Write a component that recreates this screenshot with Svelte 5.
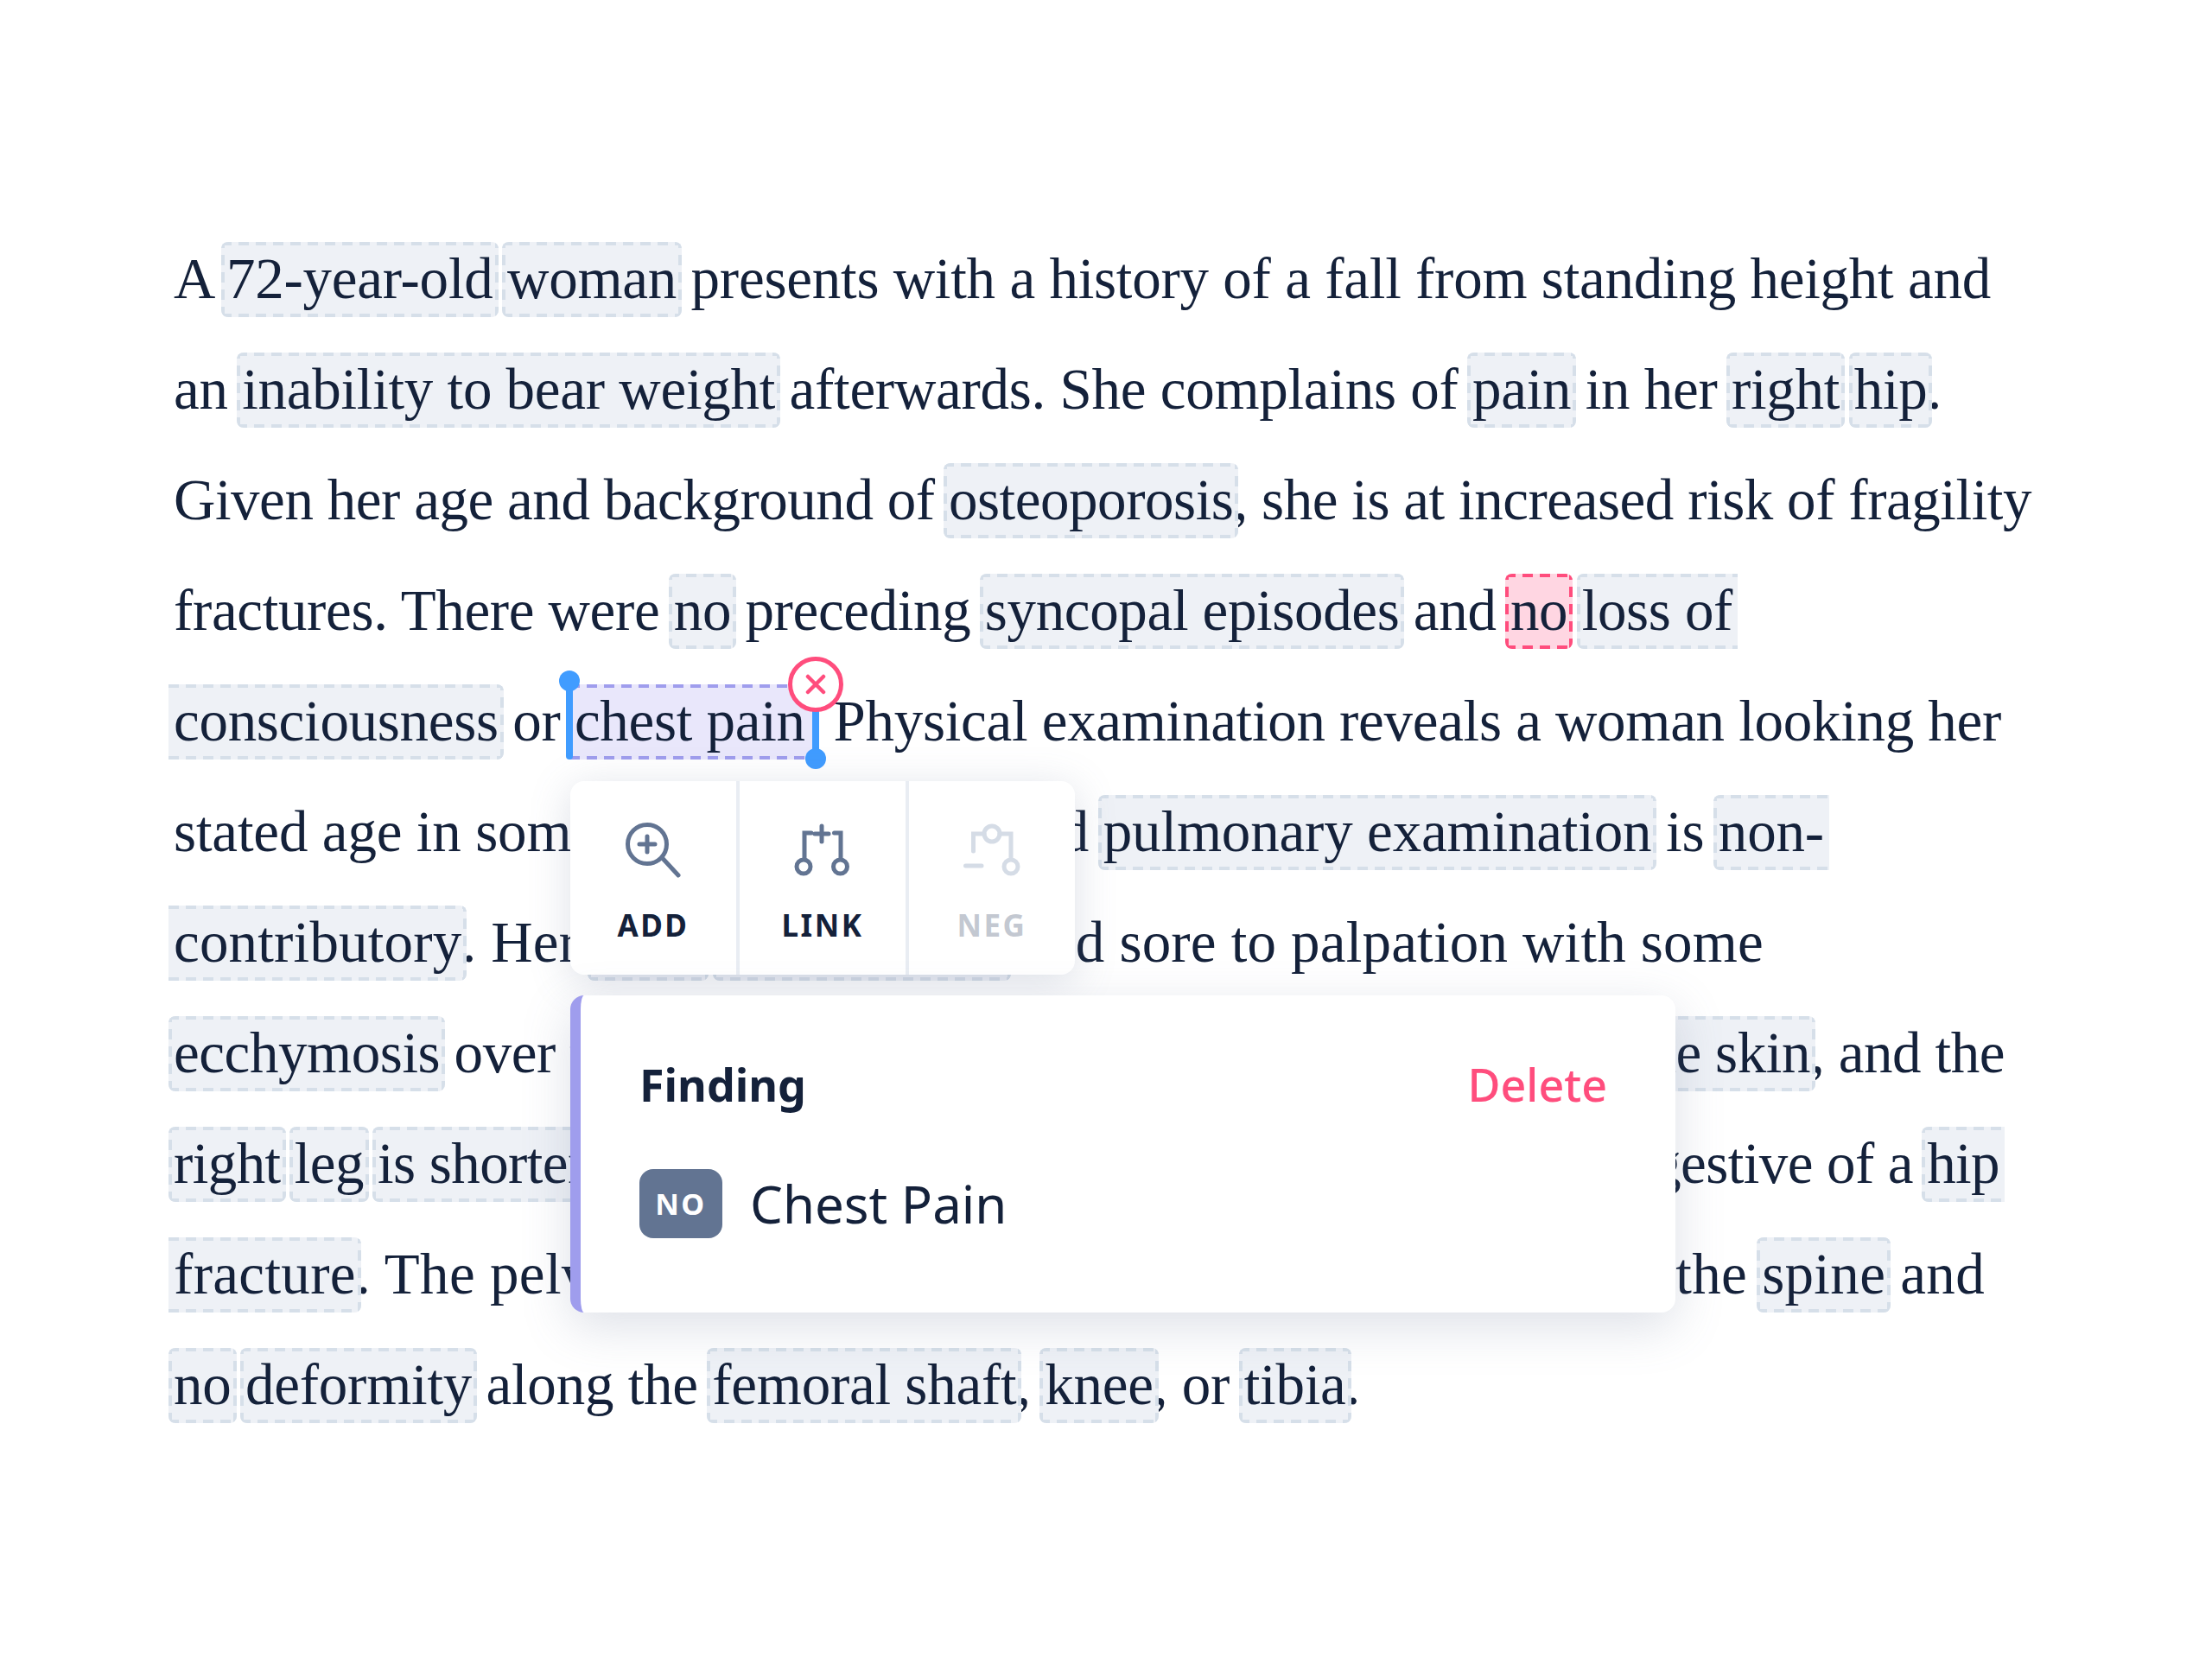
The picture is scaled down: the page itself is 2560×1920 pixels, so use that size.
<script>
  // [x] token, {x} negated token, (x) selected token, < and > mark a token that wraps over a line end
  const lines = [
    { w: 2103, text: 'A [72-year-old] [woman] presents with a history of a fall from standing height and' },
    { w: 2046, text: 'an [inability to bear weight] afterwards. She complains of [pain] in her [right] [hip].' },
    { w: 2150, text: 'Given her age and background of [osteoporosis], she is at increased risk of fragility' },
    { w: 1804, text: 'fractures. There were [no] preceding [syncopal episodes] and {no} [loss of>' },
    { w: 2115, text: '<consciousness] or (chest pain). Physical examination reveals a woman looking her' },
    { w: 1910, text: 'stated age in some distress. Cardiac and [pulmonary examination] is [non->' },
    { w: 1840, text: '<contributory]. Her [right] [hip is tender] and sore to palpation with some' },
    { w: 2119, text: '[ecchymosis] over the lateral surface of the hip with no [breaks of the skin], and the' },
    { w: 2113, text: '[right] [leg] [is shortened and externally rotated] and this is highly suggestive of a [hip>' },
    { w: 2096, text: '<fracture]. The pelvis is stable. There is no tenderness throughout the [spine] and' },
    { w: 1373, text: '[no] [deformity] along the [femoral shaft], [knee], or [tibia].' }
  ];

  function parse(text) {
    return text.split(/([\[<{(][^\]>})]*[\]>})])/).filter(Boolean).map((part) => {
      const open = part[0];
      const close = part[part.length - 1];
      if ('[<{('.includes(open) && part.length > 1 && ']>})'.includes(close)) {
        return {
          label: part.slice(1, -1),
          cls: [
            'token',
            open === '{' ? 'neg' : '',
            open === '(' ? 'selected' : '',
            open === '<' ? 'cut-left' : '',
            close === '>' ? 'cut-right' : ''
          ].join(' ')
        };
      }
      return { label: part, cls: '' };
    });
  }

  // squeeze a line's tracking so it ends where the note's line ends
  function fit(node, line) {
    const chars = line.text.replace(/[\[\]{}()<>]/g, '').length;
    const natural = node.getBoundingClientRect().width;
    node.style.letterSpacing = (line.w - natural) / chars + 'px';
  }
</script>

<main class="page">
  <article class="note">
    {#each lines as line}
      <p class="line" use:fit={line}>
        {#each parse(line.text) as part}
          {#if part.cls}
            <span class={part.cls}>{#if part.cls.includes('selected')}<i class="handle start"></i><i class="handle end"></i><button class="remove" aria-label="Remove"><svg viewBox="0 0 24 24" width="24" height="24"><path d="M3 3 21 21M21 3 3 21" /></svg></button>{/if}{part.label}</span>
          {:else}{part.label}{/if}
        {/each}
      </p>
    {/each}
  </article>

  <div class="toolbar">
    <button class="tool">
      <svg viewBox="0 0 80 80" width="80" height="80">
        <circle cx="33" cy="27" r="22.5" />
        <path d="M33 18V36M24 27H42M50.5 43 69 63" />
      </svg>
      <span>ADD</span>
    </button>
    <button class="tool">
      <svg viewBox="0 0 80 80" width="80" height="80">
        <circle cx="18" cy="53" r="8" />
        <circle cx="60.5" cy="53" r="8" />
        <path d="M19 44V14H27M61 44V14H53.5M39 6V24M31 15H47" />
      </svg>
      <span>LINK</span>
    </button>
    <button class="tool off">
      <svg viewBox="0 0 80 80" width="80" height="80">
        <circle cx="40" cy="15" r="9" />
        <circle cx="62" cy="53" r="8" />
        <path d="M18.5 35V15H31M49 15H62V44M9.5 52H28" />
      </svg>
      <span>NEG</span>
    </button>
  </div>

  <section class="finding">
    <header>
      <h2>Finding</h2>
      <button class="delete">Delete</button>
    </header>
    <div class="concept">
      <span class="badge">NO</span>
      <span>Chest Pain</span>
    </div>
  </section>
</main>

<style>
  :global(body) {
    margin: 0;
    background: #fff;
  }

  .page {
    position: relative;
    height: 1920px;
    overflow: hidden;
    color: #14213a;
  }

  .note {
    padding: 258px 0 0 201px;
    font-family: 'Liberation Serif', serif;
    font-size: 67px;
  }

  .line {
    margin: 0;
    width: fit-content;
    height: 128px;
    line-height: 128px;
    white-space: nowrap;
  }

  .token {
    --fill: #eef1f6;
    --dash: #d6dfe9;
    --h: repeating-linear-gradient(90deg, var(--dash) 0 12px, transparent 12px 20px);
    --v: repeating-linear-gradient(0deg, var(--dash) 0 12px, transparent 12px 20px);
    position: relative;
    padding: 5px 6px 8px;
    margin: 0 -6px;
    border-radius: 8px;
    background:
      var(--h) top / 100% 4px no-repeat,
      var(--h) bottom / 100% 4px no-repeat,
      var(--v) left / 4px 100% no-repeat,
      var(--v) right / 4px 100% no-repeat,
      var(--fill);
  }

  .token.cut-right {
    border-radius: 8px 0 0 8px;
    background:
      var(--h) top / 100% 4px no-repeat,
      var(--h) bottom / 100% 4px no-repeat,
      var(--v) left / 4px 100% no-repeat,
      var(--fill);
  }

  .token.cut-left {
    border-radius: 0 8px 8px 0;
    background:
      var(--h) top / 100% 4px no-repeat,
      var(--h) bottom / 100% 4px no-repeat,
      var(--v) right / 4px 100% no-repeat,
      var(--fill);
  }

  .token.neg {
    --fill: #ffd6e2;
    --dash: #ff4d7d;
  }

  .token.selected {
    --fill: #e9e7fb;
    --dash: #9f9ded;
    padding-right: 12px;
    margin-right: -12px;
    border-radius: 0;
    background:
      var(--h) top / 100% 4px no-repeat,
      var(--h) bottom / 100% 4px no-repeat,
      var(--fill);
  }

  .handle {
    position: absolute;
    width: 8px;
    background: #409cff;
  }

  .handle::after {
    content: '';
    position: absolute;
    left: -8px;
    width: 24px;
    height: 24px;
    border-radius: 50%;
    background: #409cff;
  }

  .handle.start {
    left: -4px;
    top: -9px;
    bottom: 0;
    border-radius: 0 0 4px 4px;
  }

  .handle.start::after {
    top: -7px;
  }

  .handle.end {
    right: -4px;
    top: 0;
    bottom: -4px;
  }

  .handle.end::after {
    bottom: -7px;
  }

  .remove {
    position: absolute;
    right: -32px;
    top: -32px;
    box-sizing: border-box;
    width: 64px;
    height: 64px;
    padding: 0;
    display: flex;
    align-items: center;
    justify-content: center;
    border: 5px solid #ff4d7d;
    border-radius: 50%;
    background: #fff;
  }

  .remove path {
    fill: none;
    stroke: #ff4d7d;
    stroke-width: 4.5;
    stroke-linecap: round;
  }

  .toolbar {
    position: absolute;
    left: 660px;
    top: 904px;
    width: 584px;
    height: 224px;
    display: flex;
    background: #fff;
    border-radius: 16px;
    box-shadow: 0 8px 48px rgba(98, 116, 146, 0.22);
    font-family: 'Noto Sans', sans-serif;
  }

  .tool {
    flex: 1;
    padding: 46px 0 0;
    display: flex;
    flex-direction: column;
    align-items: center;
    gap: 18px;
    border: 0;
    background: none;
    color: #14213a;
    font: inherit;
    font-size: 35px;
    font-weight: 700;
    letter-spacing: 2.5px;
    line-height: 46px;
  }

  .tool + .tool {
    border-left: 4px solid #e9edf3;
  }

  .tool svg {
    fill: none;
    stroke: #627492;
    stroke-width: 5;
    stroke-linecap: round;
  }

  .tool.off {
    color: #c3c8d1;
  }

  .tool.off svg {
    stroke: #d5dce6;
  }

  .finding {
    position: absolute;
    left: 660px;
    top: 1152px;
    box-sizing: border-box;
    width: 1279px;
    height: 367px;
    padding: 68px 79px 0 68px;
    background: #fff;
    border-left: 12px solid #9f9ded;
    border-radius: 16px;
    box-shadow: 0 16px 56px rgba(98, 116, 146, 0.22);
    font-family: 'Noto Sans', sans-serif;
  }

  .finding header {
    display: flex;
    justify-content: space-between;
    align-items: center;
  }

  h2 {
    margin: 0;
    font-size: 52px;
    font-weight: 700;
    line-height: 70px;
  }

  .delete {
    padding: 0;
    border: 0;
    background: none;
    color: #ff4d7d;
    font: inherit;
    font-size: 52px;
    font-weight: 500;
    line-height: 70px;
  }

  .concept {
    margin-top: 62px;
    display: flex;
    align-items: center;
    gap: 32px;
    font-size: 60px;
  }

  .badge {
    width: 96px;
    height: 80px;
    display: flex;
    align-items: center;
    justify-content: center;
    border-radius: 16px;
    background: #627492;
    color: #fff;
    font-size: 34px;
    font-weight: 700;
    letter-spacing: 2.5px;
  }
</style>
